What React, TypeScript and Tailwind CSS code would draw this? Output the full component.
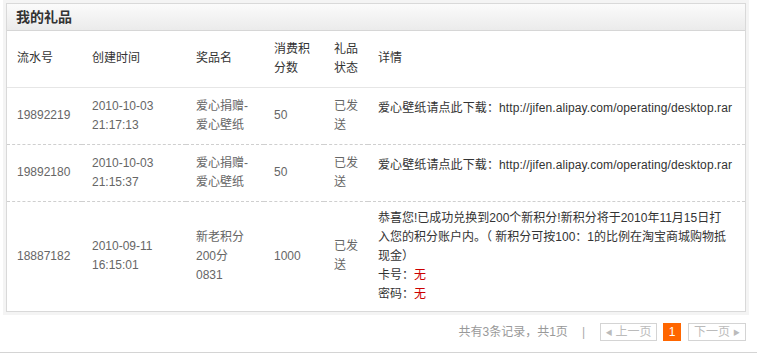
const rows = [
  { id: "19892219", date: "2010-10-03", time: "21:17:13", name: ["爱心捐赠-", "爱心壁纸"], cost: "50" },
  { id: "19892180", date: "2010-10-03", time: "21:15:37", name: ["爱心捐赠-", "爱心壁纸"], cost: "50" },
];

const font = { fontFamily: '"Liberation Sans", "Noto Sans CJK SC", sans-serif' };

function Status() {
  return (
    <td className="pl-[10px] align-middle">
      已发
      <br />
      送
    </td>
  );
}

export default function App() {
  return (
    <div className="w-[757px] h-[353px] bg-white text-[12px] leading-[19px] text-[#666]" style={font}>
      <div className="pt-[3px] pl-[6px]">
        <div className="w-[740px] border border-[#d9d9d9] shadow-[0_0_0_3px_#f4f4f4]">
          {/* 标题栏 */}
          <div className="h-[27px] flex items-center pl-[9px] bg-gradient-to-b from-[#fbfbfb] to-[#ebebeb] border-b border-[#d6d6d6]">
            <span className="text-[14px] font-bold text-[#333]">我的礼品</span>
          </div>
          <table className="w-full border-collapse table-fixed">
            <colgroup>
              <col className="w-[75px]" />
              <col className="w-[104px]" />
              <col className="w-[78px]" />
              <col className="w-[60px]" />
              <col className="w-[44px]" />
              <col />
            </colgroup>
            <thead>
              <tr className="h-[56px] border-b border-[#e6e6e6] text-[#333]">
                <th className="pl-[10px] text-left font-normal">流水号</th>
                <th className="pl-[10px] text-left font-normal">创建时间</th>
                <th className="pl-[10px] text-left font-normal">奖品名</th>
                <th className="pl-[10px] text-left font-normal">
                  消费积
                  <br />
                  分数
                </th>
                <th className="pl-[10px] text-left font-normal">
                  礼品
                  <br />
                  状态
                </th>
                <th className="pl-[10px] text-left font-normal">详情</th>
              </tr>
            </thead>
            <tbody>
              {rows.map((r) => (
                <tr key={r.id} className="h-[57px] border-b border-dashed border-[#cfcfcf]">
                  <td className="pl-[10px]">{r.id}</td>
                  <td className="pl-[10px]">
                    {r.date}
                    <br />
                    {r.time}
                  </td>
                  <td className="pl-[10px]">
                    {r.name[0]}
                    <br />
                    {r.name[1]}
                  </td>
                  <td className="pl-[10px]">{r.cost}</td>
                  <Status />
                  <td className="pl-[10px] pr-[6px] align-top pt-[11px] text-[#333] tracking-[0.1px] whitespace-nowrap">
                    爱心壁纸请点此下载：http://jifen.alipay.com/operating/desktop.rar
                  </td>
                </tr>
              ))}
              <tr className="h-[109px]">
                <td className="pl-[10px]">18887182</td>
                <td className="pl-[10px]">
                  2010-09-11
                  <br />
                  16:15:01
                </td>
                <td className="pl-[10px]">
                  新老积分
                  <br />
                  200分
                  <br />
                  0831
                </td>
                <td className="pl-[10px]">1000</td>
                <Status />
                <td className="pl-[10px] pr-[6px] py-[7px] text-[#333] whitespace-nowrap">
                  恭喜您!已成功兑换到200个新积分!新积分将于2010年11月15日打
                  <br />
                  入您的积分账户内。（ 新积分可按100：1的比例在淘宝商城购物抵
                  <br />
                  现金）
                  <br />
                  卡号：<span className="text-[#c00]">无</span>
                  <br />
                  密码：<span className="text-[#c00]">无</span>
                </td>
              </tr>
            </tbody>
          </table>
        </div>
      </div>
      {/* 分页 */}
      <div className="flex items-center justify-end pr-[11px] pt-[11px] pb-[10px] border-b-2 border-[#d4d4d4]">
        <span className="text-[#999]">共有3条记录，共1页</span>
        <span className="ml-[14px] mr-[15px] text-[#aaa]">|</span>
        <span className="h-[18px] w-[57px] flex items-center justify-center border border-[#d4d4d4] text-[#bbb]">
          <span className="text-[7px] mr-[3px]">◀</span>上一页
        </span>
        <span className="ml-[6px] h-[18px] w-[18px] flex items-center justify-center bg-[#f60] text-white">1</span>
        <span className="ml-[7px] h-[18px] w-[58px] flex items-center justify-center border border-[#d4d4d4] text-[#bbb]">
          下一页<span className="text-[7px] ml-[3px]">▶</span>
        </span>
      </div>
    </div>
  );
}
